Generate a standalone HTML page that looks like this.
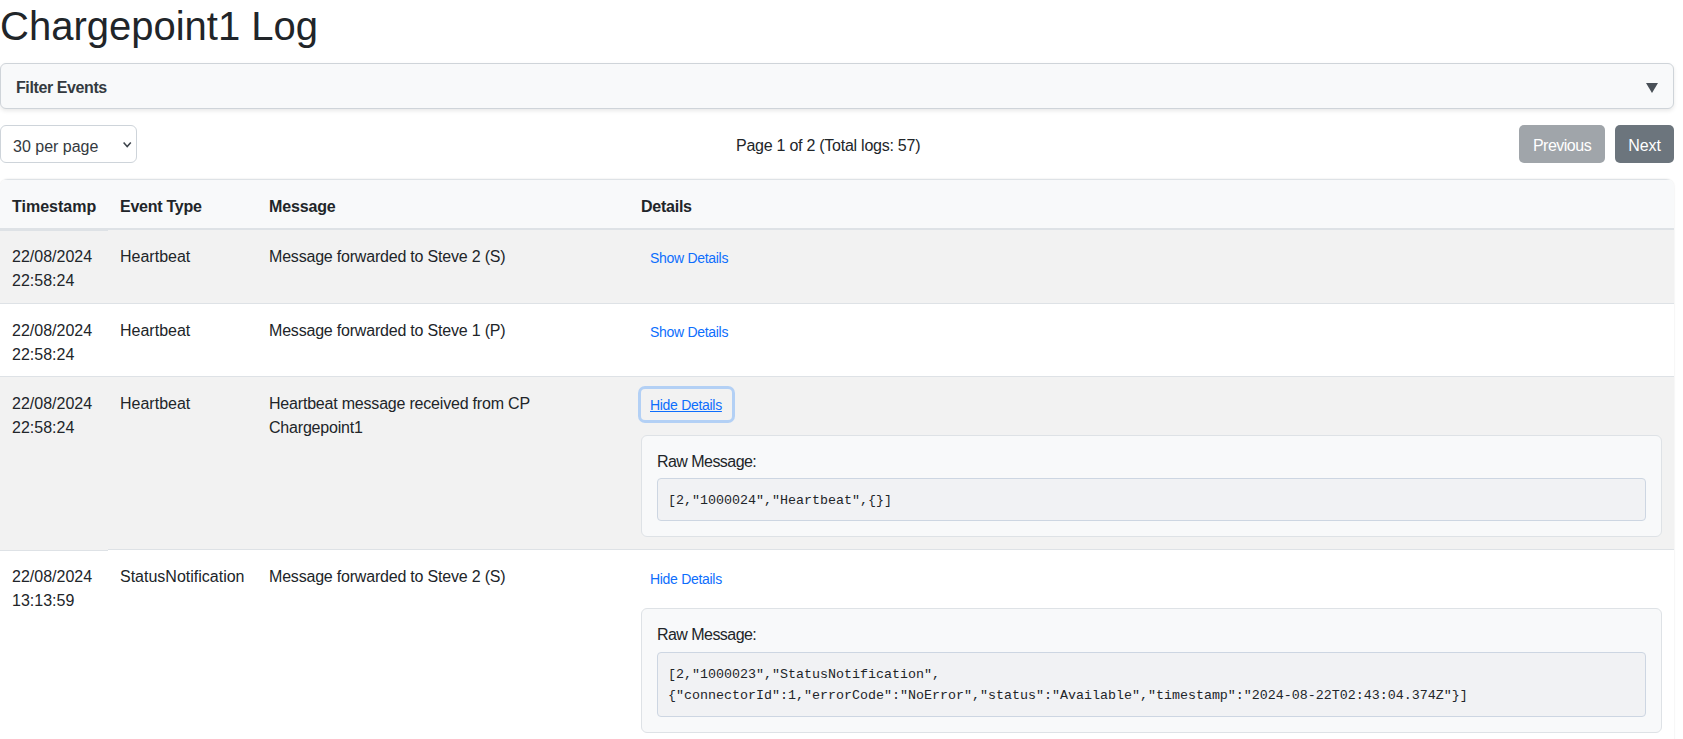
<!DOCTYPE html>
<html>
<head>
<meta charset="utf-8">
<style>
html,body{margin:0;padding:0;background:#fff;}
body{width:1683px;height:739px;overflow:hidden;position:relative;font-family:"Liberation Sans",sans-serif;font-size:16px;line-height:24px;color:#212529;}
.a{position:absolute;white-space:nowrap;}
h1{position:absolute;left:0;top:2px;margin:0;font-size:40px;font-weight:400;line-height:48px;white-space:nowrap;}
.filter{position:absolute;left:0;top:63px;width:1672px;height:44px;background:#f8f9fa;border:1px solid #cfd4d9;border-radius:6px;box-shadow:0 2px 4px rgba(0,0,0,.09);}
.filter .t{position:absolute;left:15px;top:12px;font-weight:700;font-size:16px;letter-spacing:-0.4px;color:#343a40;}
.filter .arr{position:absolute;left:1645px;top:19px;width:0;height:0;border-left:6.3px solid transparent;border-right:6.3px solid transparent;border-top:10.5px solid #495057;}
.sel{position:absolute;left:0;top:125px;width:135px;height:36px;border:1px solid #ced4da;border-radius:6px;background:#fff;}
.sel .t{position:absolute;left:12px;top:9px;color:#343a40;}
.sel svg{position:absolute;left:120px;top:14px;}
.pg{position:absolute;left:736px;top:134px;font-size:16px;letter-spacing:-0.25px;white-space:nowrap;}
.btn{position:absolute;top:125px;height:38px;border-radius:5px;color:#fff;font-size:16px;letter-spacing:-0.5px;line-height:38px;text-align:center;}
.btn span{position:relative;top:2px;}
.prev{left:1519px;width:86px;background:#a0a5aa;}
.next{left:1615px;width:59px;background:#6c757d;}
.tw{position:absolute;left:0;top:179px;width:1674px;height:600px;border-radius:8px;box-shadow:0 0 2px rgba(0,0,0,.12);overflow:hidden;background:#fff;}
.row{position:absolute;left:0;width:1674px;}
.hd{top:0;height:48px;border-top:1px solid #dee2e6;border-bottom:2px solid #dee2e6;background:#f8f9fa;font-weight:700;}
.r1{top:51px;height:73px;background:#f2f2f2;border-bottom:1px solid #dee2e6;}
.r2{top:125px;height:72px;background:#fff;border-bottom:1px solid #dee2e6;}
.r3{top:198px;height:172px;background:#f2f2f2;border-bottom:1px solid #dee2e6;}
.r4{top:372px;height:300px;background:#fff;}
.r4 .tx{top:14px;}.r4 .lnk{top:12px;}
.c1{left:12px;}.c2{left:120px;}.c3{left:269px;letter-spacing:-0.2px;}.c4{left:641px;}
.hd .c2,.hd .c4{letter-spacing:-0.25px;}.hd .c3{letter-spacing:-0.15px;}
.hd .a{top:15px;}
.tx{top:15px;}
.lnk{position:absolute;left:641px;top:12px;width:91px;height:31px;box-sizing:border-box;font-size:14px;letter-spacing:-0.3px;color:#0d6efd;line-height:21px;padding:6px 0 0 9px;white-space:nowrap;border-radius:4px;}
.lnk.focus{text-decoration:underline;box-shadow:0 0 0 3px #b3d0f5;}
.card{position:absolute;left:641px;width:1019px;background:#f8f9fa;border:1px solid #dee2e6;border-radius:6px;}
.card .rm{position:absolute;left:15px;top:14px;font-size:16px;letter-spacing:-0.55px;}
pre{position:absolute;left:15px;top:42px;width:989px;margin:0;box-sizing:border-box;background:#f1f2f4;border:1px solid #cdd6e2;border-radius:4px;padding:11px 10px 9px 10px;font-family:"Liberation Mono",monospace;font-size:13.33px;line-height:21px;white-space:pre;color:#212529;}
</style>
</head>
<body>
<h1>Chargepoint1 Log</h1>
<div class="filter"><div class="t">Filter Events</div><div class="arr"></div></div>
<div class="sel"><div class="t">30 per page</div><svg width="12" height="9" viewBox="0 0 12 9"><path d="M2.6 2.5 L6.2 6.6 L9.8 2.5" fill="none" stroke="#3d434b" stroke-width="1.5"/></svg></div>
<div class="pg">Page 1 of 2 (Total logs: 57)</div>
<div class="btn prev"><span>Previous</span></div>
<div class="btn next"><span style="letter-spacing:-0.1px">Next</span></div>
<div class="tw">
 <div class="row hd"><div class="a c1">Timestamp</div><div class="a c2">Event Type</div><div class="a c3">Message</div><div class="a c4">Details</div></div>
 <div class="a" style="left:0;top:51px;width:108px;height:1px;background:#dee2e6;z-index:2"></div>
 <div class="row r1"><div class="a c1 tx">22/08/2024<br>22:58:24</div><div class="a c2 tx">Heartbeat</div><div class="a c3 tx">Message forwarded to Steve 2 (S)</div><div class="lnk">Show Details</div></div>
 <div class="row r2"><div class="a c1 tx">22/08/2024<br>22:58:24</div><div class="a c2 tx">Heartbeat</div><div class="a c3 tx">Message forwarded to Steve 1 (P)</div><div class="lnk">Show Details</div></div>
 <div class="row r3"><div class="a c1 tx">22/08/2024<br>22:58:24</div><div class="a c2 tx">Heartbeat</div><div class="a c3 tx">Heartbeat message received from CP<br>Chargepoint1</div><div class="lnk focus">Hide Details</div>
  <div class="card" style="top:58px;height:100px;"><div class="rm">Raw Message:</div><pre>[2,"1000024","Heartbeat",{}]</pre></div></div>
 <div class="a" style="left:0;top:370px;width:108px;height:1px;background:#f2f2f2;z-index:2"></div>
 <div class="a" style="left:0;top:371px;width:108px;height:1px;background:#dee2e6;z-index:2"></div>
 <div class="row r4"><div class="a c1 tx">22/08/2024<br>13:13:59</div><div class="a c2 tx">StatusNotification</div><div class="a c3 tx">Message forwarded to Steve 2 (S)</div><div class="lnk">Hide Details</div>
  <div class="card" style="top:57px;height:123px;"><div class="rm">Raw Message:</div><pre style="top:43px;padding-top:11px;padding-bottom:10px;">[2,"1000023","StatusNotification",
{"connectorId":1,"errorCode":"NoError","status":"Available","timestamp":"2024-08-22T02:43:04.374Z"}]</pre></div></div>
</div>
</body>
</html>
